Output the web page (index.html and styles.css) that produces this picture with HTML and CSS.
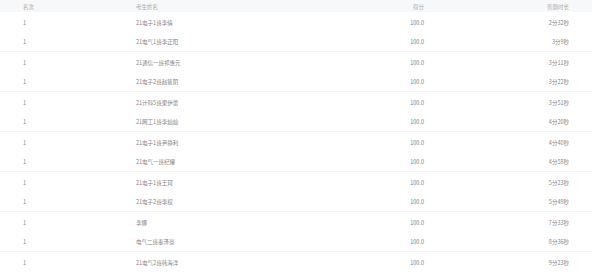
FILE: index.html
```html
<!DOCTYPE html>
<html lang="zh">
<head>
<meta charset="utf-8">
<link rel="stylesheet" href="styles.css">
</head>
<body>
<div class="table">
  <div class="row head">
    <div class="cell c1">名次</div>
    <div class="cell c2">考生姓名</div>
    <div class="cell c3">得分</div>
    <div class="cell c4">答题时长</div>
  </div>
  <div class="row"><div class="cell c1">1</div><div class="cell c2">21电子1班李倩</div><div class="cell c3">100.0</div><div class="cell c4">2分32秒</div></div>
  <div class="row sep"><div class="cell c1">1</div><div class="cell c2">21电气1班李正阳</div><div class="cell c3">100.0</div><div class="cell c4">3分9秒</div></div>
  <div class="row"><div class="cell c1">1</div><div class="cell c2">21通信一班祁惠元</div><div class="cell c3">100.0</div><div class="cell c4">3分11秒</div></div>
  <div class="row sep"><div class="cell c1">1</div><div class="cell c2">21电子2班赵筱阴</div><div class="cell c3">100.0</div><div class="cell c4">3分22秒</div></div>
  <div class="row"><div class="cell c1">1</div><div class="cell c2">21计科5班梁伊蕾</div><div class="cell c3">100.0</div><div class="cell c4">3分51秒</div></div>
  <div class="row sep"><div class="cell c1">1</div><div class="cell c2">21网工1班李灿灿</div><div class="cell c3">100.0</div><div class="cell c4">4分20秒</div></div>
  <div class="row"><div class="cell c1">1</div><div class="cell c2">21电子1班尹静利</div><div class="cell c3">100.0</div><div class="cell c4">4分40秒</div></div>
  <div class="row sep"><div class="cell c1">1</div><div class="cell c2">21电气一班纪耀</div><div class="cell c3">100.0</div><div class="cell c4">4分58秒</div></div>
  <div class="row"><div class="cell c1">1</div><div class="cell c2">21电子1班王珂</div><div class="cell c3">100.0</div><div class="cell c4">5分23秒</div></div>
  <div class="row sep"><div class="cell c1">1</div><div class="cell c2">21电子2班李权</div><div class="cell c3">100.0</div><div class="cell c4">5分49秒</div></div>
  <div class="row"><div class="cell c1">1</div><div class="cell c2">李娜</div><div class="cell c3">100.0</div><div class="cell c4">7分33秒</div></div>
  <div class="row sep"><div class="cell c1">1</div><div class="cell c2">电气二班秦泽豪</div><div class="cell c3">100.0</div><div class="cell c4">8分36秒</div></div>
  <div class="row"><div class="cell c1">1</div><div class="cell c2">21电气2班韩海洋</div><div class="cell c3">100.0</div><div class="cell c4">9分23秒</div></div>
</div>
</body>
</html>
```
FILE: styles.css
```css
html, body {
  margin: 0;
  padding: 0;
  background: #ffffff;
}
body {
  font-family: "Noto Sans CJK SC", "Noto Sans", sans-serif;
  font-size: 5.5px;
  color: #858585;
}
.table {
  width: 592px;
}
.row {
  display: grid;
  grid-template-columns: 113px 187px 147px 145px;
  height: 20px;
  align-items: center;
  box-sizing: border-box;
}
.row.head {
  height: 12px;
  background: #f7f8fa;
  color: #aaaaaa;
}
.row.sep {
  border-bottom: 1px solid #f3f4f6;
}
.cell {
  line-height: 8px;
  white-space: nowrap;
  padding-top: 1px;
}
.c1, .c2 {
  padding-left: 23px;
}
.c3, .c4 {
  text-align: right;
  padding-right: 23px;
}
```
